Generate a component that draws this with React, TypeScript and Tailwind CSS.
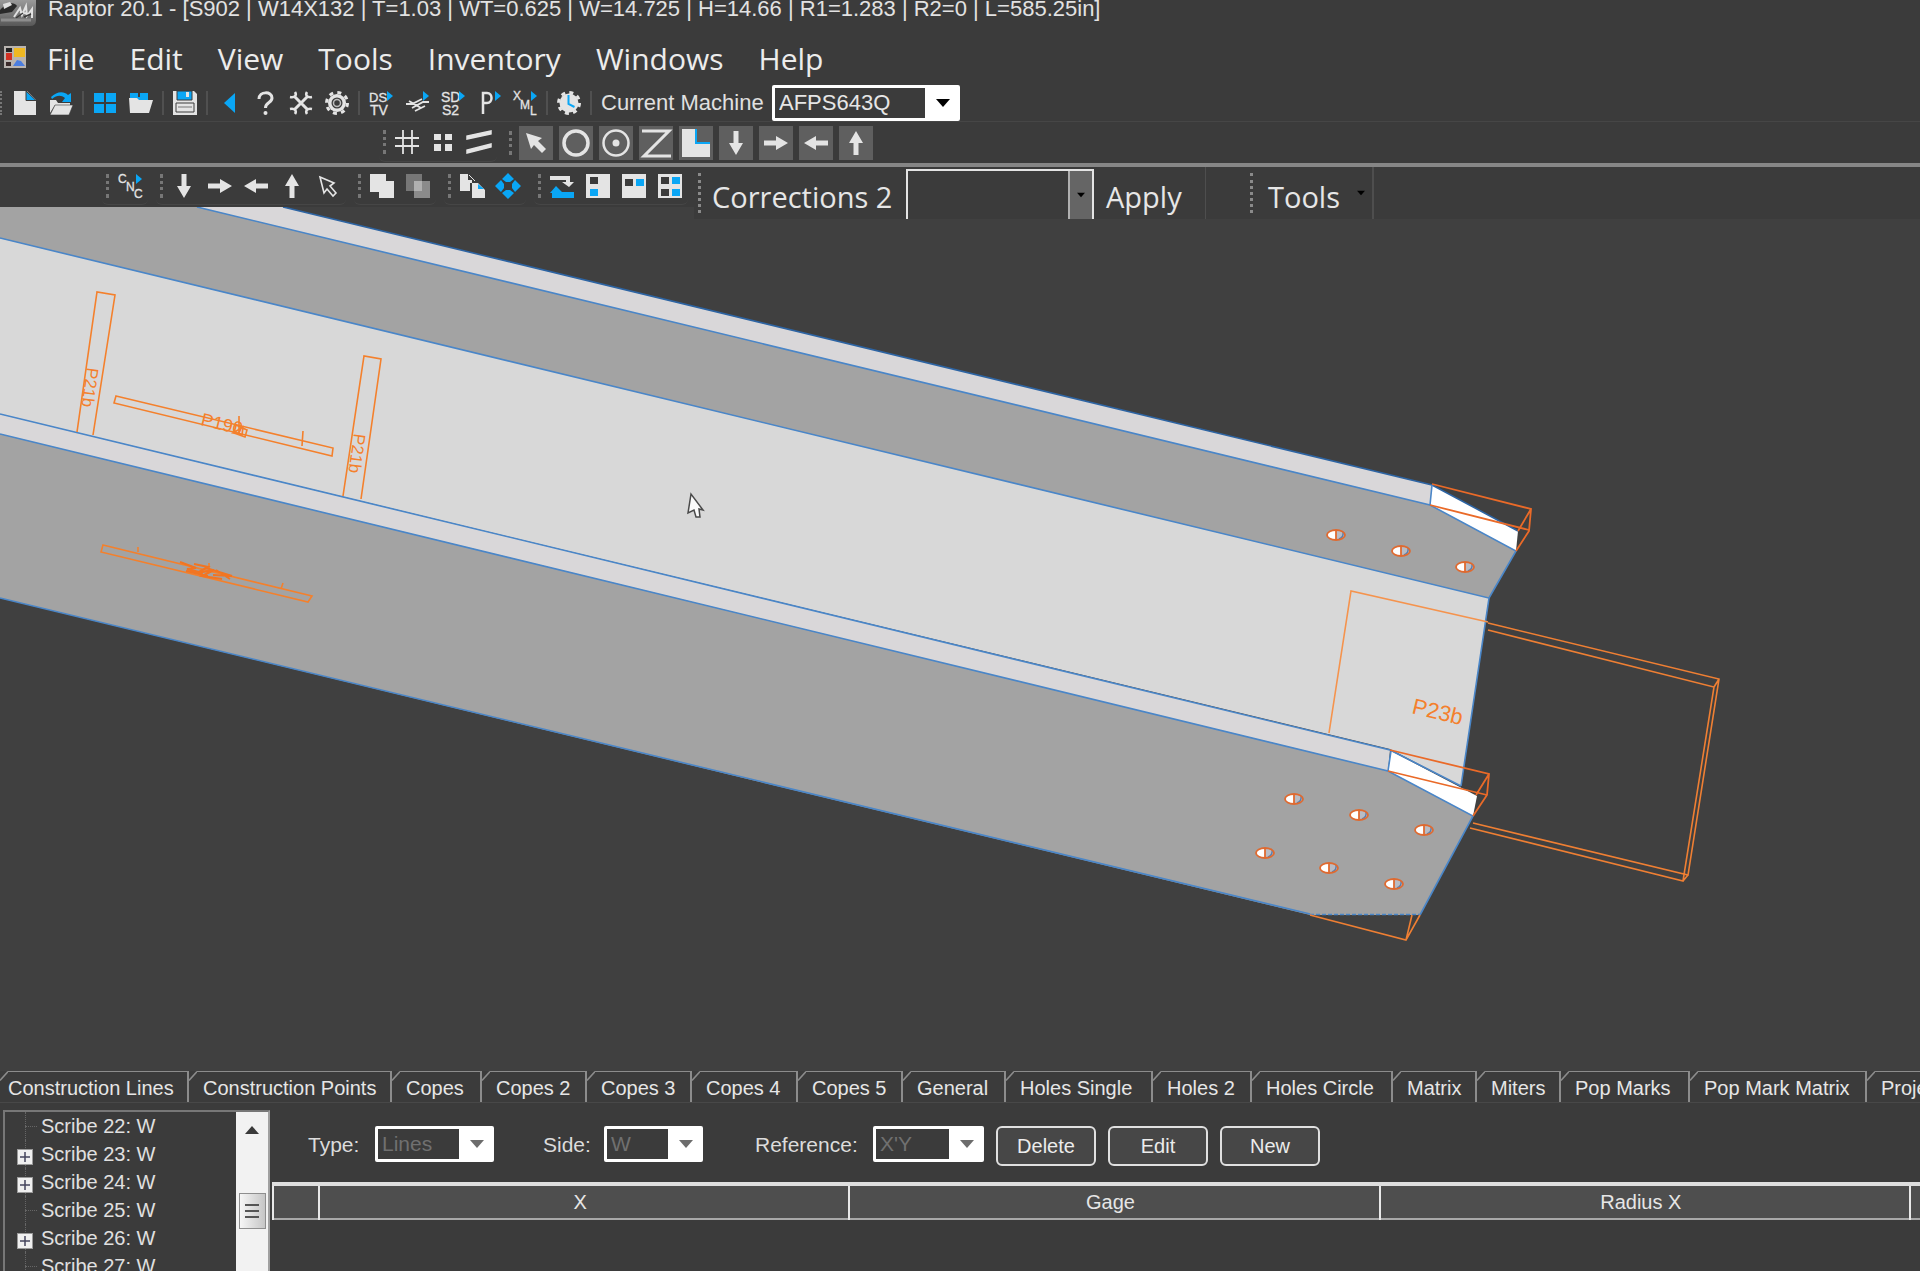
import type { ReactNode } from "react";

const LIGHT = "#e4e4e4";
const BLUE = "#0aa6f5";

function Icon({ children }: { children: ReactNode }) {
  return (
    <svg viewBox="0 0 24 24" className="h-6 w-6 shrink-0 overflow-visible" fill={LIGHT} aria-hidden="true">
      {children}
    </svg>
  );
}

function Glyph({ x, y, size, children }: { x: number; y: number; size: number; children: string }) {
  return (
    <text x={x} y={y} fontSize={size} fill={LIGHT} stroke={LIGHT} strokeWidth=".3">
      {children}
    </text>
  );
}

const arrowShapes = {
  down: "M9.500 0h5v12h4.500L12 24 5 12h4.500z",
  right: "M0 9.500v5h12v4.500L24 12 12 5v4.500z",
  left: "M24 9.500v5H12v4.500L0 12 12 5v4.500z",
  up: "M9.500 24h5V12h4.500L12 0 5 12h4.500z",
};

const arrow = (d: keyof typeof arrowShapes) => (
  <Icon>
    <path d={arrowShapes[d]} />
  </Icon>
);

const exportMark = <path d="M18 0l6 5-6 5z" fill={BLUE} />;

const icons: Record<string, ReactNode> = {
  newFile: (
    <Icon>
      <path d="M1 0h13l9 9v15H1z" />
      <path d="M13 0l10 9.500H13z" fill={BLUE} stroke="#3b3b3b" />
    </Icon>
  ),
  open: (
    <Icon>
      <path d="M1 9h6l2 3h12v2H6L1 22z" />
      <path d="M6 14h18l-4 10H1z" stroke="#3b3b3b" strokeWidth=".6" />
      <path d="M2 6C8 0 15 0 19 4l3-2v9h-9l3-4C12 4 8 4 3 8z" fill={BLUE} />
    </Icon>
  ),
  windows: (
    <Icon>
      <path d="M1 2h10v9H1zM13 2h10v9H13zM1 13h10v9H1zM13 13h10v9H13z" fill={BLUE} />
    </Icon>
  ),
  folder: (
    <Icon>
      <path d="M1 2h8v4h2V2h8v8H1z" fill={BLUE} />
      <path d="M0 7h8l2 2h14l-4 13H1z" />
    </Icon>
  ),
  save: (
    <Icon>
      <path d="M0 0h21l3 3v21H0z" />
      <path d="M4 0h15v9H4z" fill={BLUE} stroke="#3b3b3b" />
      <path d="M13 1h3v5h-3z" />
      <path d="M3 12h18v9H3z" fill={LIGHT} stroke="#3b3b3b" />
      <path d="M5 16h14" stroke="#777" />
    </Icon>
  ),
  back: (
    <Icon>
      <path d="M18 2v20L7 12z" fill={BLUE} />
    </Icon>
  ),
  help: (
    <Icon>
      <path d="M6 8c0-8 13-8 13-1 0 5-6.500 4-6.500 10" fill="none" stroke={LIGHT} strokeWidth="3" />
      <circle cx="12.500" cy="22" r="2" />
    </Icon>
  ),
  wrench: (
    <Icon>
      <path d="M5 5l14 14M19 5L5 19" stroke={LIGHT} strokeWidth="3" />
      <path
        d="M6 1c2 3 0 6-5 5M18 1c-2 3 0 6 5 5M6 23c2-3 0-6-5-5M18 23c-2-3 0-6 5-5"
        fill="none"
        stroke={LIGHT}
        strokeWidth="2.500"
      />
    </Icon>
  ),
  gear: (
    <Icon>
      <circle cx="12" cy="12" r="9" />
      <circle cx="12" cy="12" r="10.500" fill="none" stroke={LIGHT} strokeWidth="3" strokeDasharray="4 4.250" />
      <circle cx="12" cy="12" r="5.500" fill="#3b3b3b" />
      <circle cx="12" cy="12" r="3.500" fill="none" stroke="#bdbdbd" strokeWidth="1.500" />
    </Icon>
  ),
  dstv: (
    <Icon>
      <Glyph x={0} y={11} size={13}>DS</Glyph>
      <Glyph x={1} y={24} size={14}>TV</Glyph>
      {exportMark}
    </Icon>
  ),
  merge: (
    <Icon>
      <path d="M1 13h6l10-5M7 17l11-6h6M4 10l12 7M10 20l6-3 4-2" fill="none" stroke={LIGHT} strokeWidth="1.800" />
      {exportMark}
    </Icon>
  ),
  sds2: (
    <Icon>
      <Glyph x={0} y={11} size={14}>SD</Glyph>
      <Glyph x={1} y={24} size={14}>S2</Glyph>
      {exportMark}
    </Icon>
  ),
  part: (
    <Icon>
      <path d="M6 23V2h4c6 0 6 10 0 10H7" fill="none" stroke={LIGHT} strokeWidth="2.500" />
      {exportMark}
    </Icon>
  ),
  xml: (
    <Icon>
      <Glyph x={0} y={9} size={12}>X</Glyph>
      <Glyph x={7} y={18} size={12}>M</Glyph>
      <Glyph x={17} y={24} size={12}>L</Glyph>
      {exportMark}
    </Icon>
  ),
  clock: (
    <Icon>
      <circle cx="12" cy="12" r="9.500" />
      <circle cx="12" cy="12" r="10.500" fill="none" stroke={LIGHT} strokeWidth="3" strokeDasharray="4 4.250" />
      <path d="M11.500 4v9l6 3" fill="none" stroke={BLUE} strokeWidth="2" />
    </Icon>
  ),
  grid: (
    <Icon>
      <path d="M8 0v24M17 0v24M0 8h24M0 16h24" stroke={LIGHT} strokeWidth="1.800" />
    </Icon>
  ),
  dots: (
    <Icon>
      <path d="M3 4h7v6H3zM14 4h7v6h-7zM3 14h7v7H3zM14 14h7v7h-7z" />
    </Icon>
  ),
  slopes: (
    <Icon>
      <path d="M0 9V6l24-5v3zM0 23v-3l24-6v3z" strokeWidth="1.500" stroke={LIGHT} />
    </Icon>
  ),
  cursor: (
    <Icon>
      <path d="M2 2l16 5-4 3 8 8-4 4-8-8-3 4z" />
    </Icon>
  ),
  circle: (
    <Icon>
      <circle cx="12" cy="12" r="12" fill="none" stroke={LIGHT} strokeWidth="3.500" />
    </Icon>
  ),
  target: (
    <Icon>
      <circle cx="12" cy="12" r="12.500" fill="none" stroke={LIGHT} strokeWidth="2.500" />
      <circle cx="12" cy="12" r="3.500" />
    </Icon>
  ),
  zed: (
    <Icon>
      <path d="M-2 0h27L0 25h27" fill="none" stroke={LIGHT} strokeWidth="3" />
    </Icon>
  ),
  ell: (
    <Icon>
      <path d="M-2-2h13v15h15v13H-2z" />
      <path d="M12-2v14h14" fill="none" stroke={BLUE} strokeWidth="2" />
    </Icon>
  ),
  down: arrow("down"),
  right: arrow("right"),
  left: arrow("left"),
  up: arrow("up"),
  cnc: (
    <Icon>
      <Glyph x={0} y={9} size={12}>C</Glyph>
      <Glyph x={8} y={17} size={12}>N</Glyph>
      <Glyph x={16} y={24} size={12}>C</Glyph>
      {exportMark}
    </Icon>
  ),
  pick: (
    <Icon>
      <path d="M4 3l14 6-4 3 6 7-3 3-6-7-3 4z" fill="none" stroke={LIGHT} strokeWidth="1.600" />
    </Icon>
  ),
  union: (
    <Icon>
      <path d="M0 0h16v7h8v17H9v-6H0z" />
    </Icon>
  ),
  overlap: (
    <Icon>
      <path d="M0 0h16v17H0z" fill="#777" />
      <path d="M8 7h16v17H8z" fill="#8b8b8b" />
      <path d="M8 7h8v10H8z" fill="#b0b0b0" />
    </Icon>
  ),
  copy: (
    <Icon>
      <path d="M0 0h8v6h4v3h-2v8H0z" />
      <path d="M12 9h6l7 7v8H12z" />
      <path d="M18 10l6 5h-6z" fill={BLUE} />
      <path d="M9 1l6 6" stroke={LIGHT} />
    </Icon>
  ),
  move: (
    <Icon>
      <path d="M12-1l6 6-4 3h-4L6 5zM12 25l6-6-4-3h-4l-4 3zM-1 12l6-6 3 4v4l-3 4zM25 12l-6-6-3 4v4l3 4z" fill={BLUE} />
    </Icon>
  ),
  swap: (
    <Icon>
      <path d="M0 2h20v6h4l-5 5-7-5h4V6H0z" />
      <path d="M24 24H2v-5h-2l6-7 6 6h12z" fill={BLUE} />
    </Icon>
  ),
  snapA: (
    <Icon>
      <path d="M0 0h24v24H0z" />
      <path d="M4 3h8v7H4z" fill="#3b3b3b" />
      <path d="M4 15h8v7H4z" fill={BLUE} />
    </Icon>
  ),
  snapB: (
    <Icon>
      <path d="M0 0h24v24H0z" />
      <path d="M3 5h8v7H3z" fill="#3b3b3b" />
      <path d="M14 5h8v7h-8z" fill={BLUE} />
    </Icon>
  ),
  snapC: (
    <Icon>
      <path d="M0 0h24v24H0z" />
      <path d="M3 3h8v7H3zM3 15h8v7H3z" fill="#3b3b3b" />
      <path d="M14 3h8v7h-8zM14 15h8v7h-8z" fill={BLUE} />
    </Icon>
  ),
};

function Tool({ name }: { name: string }) {
  return (
    <button type="button" aria-label={name} className="flex w-9 shrink-0 items-center justify-center">
      {icons[name]}
    </button>
  );
}

function Separator() {
  return (
    <div className="flex h-6 w-2 shrink-0 justify-center">
      <div className="w-0.5 bg-[#505050]" />
    </div>
  );
}

function Grip({ tall = false }: { tall?: boolean }) {
  return (
    <div className="flex w-2.5 shrink-0 justify-center">
      <div
        className={
          tall
            ? "h-10 border-l-[3px] border-dotted border-[#8a8a8a]"
            : "h-6 border-l-[3px] border-dotted border-[#777777]"
        }
      />
    </div>
  );
}

function ToolGroup({ names }: { names: string[] }) {
  return (
    <div className="flex h-[38px] shrink-0 items-center rounded-md border-b border-[#464646]">
      <Grip />
      {names.map((n) => (
        <Tool key={n} name={n} />
      ))}
    </div>
  );
}

function Triangle({ className }: { className: string }) {
  return (
    <svg viewBox="0 0 14 8" className={className} fill="currentColor" aria-hidden="true">
      <path d="M0 0h14L7 8z" />
    </svg>
  );
}

function Combo({ id, value, width, disabled }: { id: string; value: string; width: string; disabled?: boolean }) {
  return (
    <div className={`relative flex h-9 shrink-0 ${width}`}>
      <select
        id={id}
        disabled={disabled}
        className={
          disabled
            ? "w-full appearance-none rounded-xs border-3 border-r-[35px] border-white bg-[#3b3b3b] pl-1 text-[21px] leading-6 text-[#707070] opacity-100"
            : "w-full appearance-none rounded-xs border-3 border-r-[35px] border-white bg-[#3b3b3b] pl-1 text-[22px] leading-6 text-[#e6e6e6]"
        }
      >
        <option>{value}</option>
      </select>
      <Triangle
        className={
          disabled
            ? "pointer-events-none absolute top-3.5 right-2.5 h-2 w-3.5 text-[#6c6c6c]"
            : "pointer-events-none absolute top-3.5 right-2.5 h-2 w-3.5 text-black"
        }
      />
    </div>
  );
}

const menus = ["File", "Edit", "View", "Tools", "Inventory", "Windows", "Help"];

function TitleBar() {
  return (
    <header className="flex h-[34px] items-start gap-3">
      <svg viewBox="0 0 36 26" className="h-[26px] w-9" aria-hidden="true">
        <defs>
          <linearGradient id="badge" x1="0" y1="0" x2="0" y2="1">
            <stop offset="0" stopColor="#9a9a9a" />
            <stop offset="1" stopColor="#585858" />
          </linearGradient>
        </defs>
        <path d="M0 0h36v20q0 6-6 6H0z" fill="url(#badge)" />
        <path d="M0 10c8-8 14-8 17-4l-5 6-12 2z" fill="#2a2a2a" />
        <path d="M3 4l7-2 2 3-8 4z" fill="#e0e0e0" />
        <path d="M14 17l6-9 2 7 4-9 1 10 5-7v9M20 12l8 2" fill="none" stroke="#e2e2e2" strokeWidth="2" />
        <path d="M16 18l7-5M24 17l7-3" stroke="#3a3a3a" strokeWidth="1.500" />
        <path d="M1 20h30" stroke="#8d8d8d" strokeWidth="3" />
      </svg>
      <h1 className="text-[22px] leading-[17px] whitespace-nowrap text-[#e2e2e2]">
        Raptor 20.1 - [S902 | W14X132 | T=1.03 | WT=0.625 | W=14.725 | H=14.66 | R1=1.283 | R2=0 | L=585.25in]
      </h1>
    </header>
  );
}

function MenuBar() {
  return (
    <nav className="flex h-[50px] items-center pl-[3px] font-['Open_Sans',sans-serif] text-[30px] text-[#ececec]">
      <svg viewBox="0 0 24 24" className="mr-5 mb-1 h-6 w-6" aria-hidden="true">
        <path d="M1 1h22v22H1z" fill="#b9b4b0" />
        <path d="M3 3h6v4H3z" fill="#222" />
        <path d="M3 8h6v7H3z" fill="#d23022" />
        <path d="M3 17h5v4H3z" fill="#3a2a2a" />
        <path d="M11 3h11v9H11z" fill="#efb822" />
        <path d="M10 21l4-6 4 1 4 5z" fill="#4a7de0" />
      </svg>
      <div className="flex gap-[35px]">
        {menus.map((m) => (
          <button key={m} type="button" className="leading-10">
            {m}
          </button>
        ))}
      </div>
    </nav>
  );
}

const pressed = ["cursor", "circle", "target", "zed", "ell", "down", "right", "left", "up"];

function Toolbars() {
  return (
    <div>
      <div className="flex h-[38px] items-center border-b border-[#464646]">
        <div className="mr-[5px] h-6 border-l-2 border-dotted border-[#777777]" />
        <Tool name="newFile" />
        <Tool name="open" />
        <Separator />
        <Tool name="windows" />
        <Tool name="folder" />
        <Separator />
        <Tool name="save" />
        <Separator />
        <Tool name="back" />
        <Tool name="help" />
        <Tool name="wrench" />
        <Tool name="gear" />
        <Separator />
        <Tool name="dstv" />
        <Tool name="merge" />
        <Tool name="sds2" />
        <Tool name="part" />
        <Tool name="xml" />
        <Separator />
        <Tool name="clock" />
        <Separator />
        <label htmlFor="machine" className="ml-1.5 w-[171px] text-[22px] whitespace-nowrap text-[#e0e0e0]">
          Current Machine
        </label>
        <Combo id="machine" value="AFPS643Q" width="w-[188px]" />
      </div>
      <div className="flex h-[41px] items-center gap-2 pl-[379px]">
        <ToolGroup names={["grid", "dots", "slopes"]} />
        <div className="flex items-center">
          <Grip />
          <div className="ml-1 flex gap-1.5">
            {pressed.map((n) => (
              <button
                key={n}
                type="button"
                aria-label={n}
                className="flex h-[34px] w-[34px] items-center justify-center bg-[#5f5f5f]"
              >
                {icons[n]}
              </button>
            ))}
          </div>
        </div>
      </div>
      <div className="flex h-11 items-start gap-2 border-t-4 border-[#868686] pl-[102px]">
        <ToolGroup names={["cnc"]} />
        <ToolGroup names={["down", "right", "left", "up", "pick"]} />
        <ToolGroup names={["union", "overlap"]} />
        <ToolGroup names={["copy", "move"]} />
        <ToolGroup names={["swap", "snapA", "snapB", "snapC"]} />
        <div className="relative z-10 -ml-0.5 flex h-[52px] grow items-center bg-[#3b3b3b] font-['Open_Sans',sans-serif] text-[29px] text-[#e6e6e6]">
          <Grip tall />
          <label htmlFor="corrections" className="mr-1.5 ml-2 w-[188px] pt-2 whitespace-nowrap">
            Corrections 2
          </label>
          <div className="relative h-[50px] w-[188px] self-end">
            <select
              id="corrections"
              className="h-full w-full appearance-none border-x-2 border-t-2 border-[#e4e4e4] bg-[#3b3b3b]"
            >
              <option></option>
            </select>
            <div className="pointer-events-none absolute top-0.5 right-0.5 bottom-0 flex w-6 items-center justify-center border-l-2 border-[#b0b0b0] bg-[#656565]">
              <Triangle className="h-1.5 w-2 text-black" />
            </div>
          </div>
          <button type="button" className="h-full w-28 border-r border-[#4e4e4e] pt-2 pl-3 text-left">
            Apply
          </button>
          <div className="ml-10">
            <Grip tall />
          </div>
          <button
            type="button"
            className="flex h-full w-[118px] items-center gap-[17px] border-r-2 border-[#4e4e4e] pt-2 pl-3"
          >
            Tools
            <Triangle className="mb-2 h-1.5 w-2 text-black" />
          </button>
        </div>
      </div>
    </div>
  );
}

const holes = [
  [1336, 535],
  [1401, 551],
  [1465, 567],
  [1294, 799],
  [1359, 815],
  [1424, 830],
  [1265, 853],
  [1329, 868],
  [1394, 884],
];

function BeamView() {
  return (
    <svg
      viewBox="0 207 1920 864"
      preserveAspectRatio="xMinYMin slice"
      className="min-h-0 w-full flex-1 bg-[#404040]"
      role="img"
      aria-label="Beam model S902"
    >
      <g stroke="none">
        <path d="M0 207H197L1430 505L1516 551L1489 598L0 238z" fill="#a3a3a3" />
        <path d="M197 207H283L1432 485L1430 505z" fill="#d9d7d9" />
        <path d="M0 238L1489 598L1461 786L1390 749L0 414z" fill="#d8d8d8" />
        <path d="M0 414L1390 750L1388 771L0 434z" fill="#d9d7d9" />
        <path d="M0 434L1388 771L1473 816L1420 915H1310L0 598z" fill="#a3a3a3" />
        <path d="M1432 485L1518 531L1516 551L1430 505z" fill="#fff" />
        <path d="M1391 751L1477 796L1473 816L1388 771z" fill="#fff" />
      </g>
      <g fill="none" stroke="#4a86c8" strokeWidth="1.600">
        <path d="M283 207L1432 485L1518 531" stroke="#2d64a3" />
        <path d="M197 207L1430 505L1516 551L1489 598" />
        <path d="M1432 485L1430 505M1391 751L1388 771" />
        <path d="M0 238L1489 598L1461 786" />
        <path d="M0 414L1390 750L1461 786" />
        <path d="M0 434L1388 771L1473 816L1420 915" />
        <path d="M0 598L1310 914" />
        <path d="M1310 914.500H1420" strokeDasharray="4 2" />
      </g>
      <g fill="none" stroke="#f4802c" strokeWidth="1.600">
        <path d="M77 432L97 292L115 295L93 435" />
        <path d="M343 496L364 356L381 359L361 499" />
        <path d="M116 396L333 448L332 456L114 403z" />
        <path d="M239 416V433M303 431L302 446" />
        <path d="M103 545L312 596L308 602L101 552zM138 547V552M209 563V569M283 583L281 589" />
        <path
          d="M180 562l16 6-9 1 16 4M194 564l14 3-11 6 17-3-12 6 20 3M206 568l26 8-19-1M216 570l14 9M186 571l22 5"
          stroke="#f27522"
          strokeWidth="2"
        />
        <path d="M233 433l10-6-1 8zM236 425l11 5-2 7-11-4z" />
      </g>
      <g fill="none" stroke="#ef7f33" strokeWidth="1.600">
        <path d="M1329 733L1351 591L1488 622" stroke="#f5934d" />
        <path d="M1488 623L1719 679L1688 875L1473 823M1488 630L1714 687L1683 881L1470 828M1719 679L1714 687M1688 875L1683 881" />
        <path d="M1310 915L1406 940L1420 915M1406 940L1412 915" />
      </g>
      <g fill="none" stroke="#ea6a28" strokeWidth="1.800">
        <path d="M1432 484L1531 509L1529 531L1516 551M1430 505L1529 530M1531 509L1518 531" />
        <path d="M1390 750L1489 774L1487 795L1473 816M1388 771L1487 795M1489 774L1476 795" />
      </g>
      <g fill="#f4802c" fontFamily="'Liberation Sans', sans-serif">
        <text transform="translate(87 367) rotate(98)" fontSize="17">
          P21b
        </text>
        <text transform="translate(354 433) rotate(98)" fontSize="17">
          P21b
        </text>
        <text transform="translate(200 425) rotate(13.500)" fontSize="18">
          P190
        </text>
        <text transform="translate(1411 713) rotate(13.500)" fontSize="22">
          P23b
        </text>
      </g>
      {holes.map(([x, y]) => (
        <g key={`${x}-${y}`}>
          <ellipse cx={x} cy={y} rx="9" ry="5" fill="#b9bcc4" />
          <path d={`M${x} ${y - 5}a9 5 0 0 0 0 10z`} fill="#fff" />
          <path d={`M${x + 3} ${y + 4}q5-2 4-7`} fill="none" stroke="#5a7fae" strokeWidth="1.500" />
          <ellipse cx={x} cy={y} rx="9" ry="5" fill="none" stroke="#df6a30" strokeWidth="1.800" />
          <path d={`M${x} ${y - 5}v10`} stroke="#df6a30" strokeWidth="1.800" />
        </g>
      ))}
      <path
        d="M691 494L688 513L694 510L696 517H700L699 509L703 510z"
        fill="#fafafa"
        stroke="#4a4a4a"
        strokeWidth="1.500"
      />
    </svg>
  );
}

const tabs: [string, string, string][] = [
  ["Construction Lines", "w-[189px]", "pl-0"],
  ["Construction Points", "w-[203px]", "pl-1.5"],
  ["Copes", "w-[90px]", "pl-1.5"],
  ["Copes 2", "w-[105px]", "pl-1.5"],
  ["Copes 3", "w-[105px]", "pl-1.5"],
  ["Copes 4", "w-[106px]", "pl-1.5"],
  ["Copes 5", "w-[105px]", "pl-1.5"],
  ["General", "w-[103px]", "pl-1.5"],
  ["Holes Single", "w-[147px]", "pl-1.5"],
  ["Holes 2", "w-[99px]", "pl-1.5"],
  ["Holes Circle", "w-[141px]", "pl-1.5"],
  ["Matrix", "w-[84px]", "pl-1.5"],
  ["Miters", "w-[84px]", "pl-1.5"],
  ["Pop Marks", "w-[129px]", "pl-1.5"],
  ["Pop Mark Matrix", "w-[177px]", "pl-1.5"],
  ["Projection", "w-[130px]", "pl-1.5"],
];

function TabStrip() {
  return (
    <div role="tablist" className="flex h-8 shrink-0 overflow-hidden border-b border-[#484848] text-[20px]">
      {tabs.map(([label, width, pad]) => (
        <button
          key={label}
          type="button"
          role="tab"
          className={`flex shrink-0 border-r-2 border-[#8c8c8c] text-left text-[#e6e6e6] ${width}`}
        >
          <svg viewBox="0 0 8 10" className="h-2.5 w-2 shrink-0" aria-hidden="true">
            <path d="M0 9.500L8 .5" stroke="#8c8c8c" strokeWidth="1.500" />
          </svg>
          <span className={`h-full grow border-t border-[#8c8c8c] leading-8 whitespace-nowrap ${pad}`}>{label}</span>
        </button>
      ))}
    </div>
  );
}

const scribes = [
  { label: "Scribe 22: W", open: false },
  { label: "Scribe 23: W", open: true },
  { label: "Scribe 24: W", open: true },
  { label: "Scribe 25: W", open: false },
  { label: "Scribe 26: W", open: true },
  { label: "Scribe 27: W", open: false },
];

function ScribeTree() {
  return (
    <div className="ml-[3px] flex w-[267px] shrink-0 overflow-hidden border-2 border-b-0 border-[#777777] border-r-[#a0a0a0]">
      <ul className="grow text-[20px] text-[#e0e0e0]">
        {scribes.map((s) => (
          <li key={s.label} className="flex h-7 items-center">
            <span className="relative ml-3 flex h-full w-6 items-center">
              <span className="absolute inset-y-0 left-2 border-l border-dotted border-[#666666]" />
              {s.open ? (
                <button
                  type="button"
                  aria-label={`Expand ${s.label}`}
                  className="relative mt-1.5 flex h-4 w-4 items-center justify-center border border-[#9a9a9a] bg-[#f0f0f0]"
                >
                  <svg viewBox="0 0 10 10" className="h-2.5 w-2.5" aria-hidden="true">
                    <path d="M5 0v10M0 5h10" stroke="#44445c" strokeWidth="1.500" />
                  </svg>
                </button>
              ) : (
                <span className="ml-2 w-3 border-t border-dotted border-[#666666]" />
              )}
            </span>
            <span className="whitespace-nowrap">{s.label}</span>
          </li>
        ))}
      </ul>
      <div className="flex w-8 flex-col items-center bg-[#f2f2f2]">
        <svg viewBox="0 0 14 8" className="mt-3.5 h-2 w-3.5" aria-hidden="true">
          <path d="M7 0l7 8H0z" fill="#3a3a3a" />
        </svg>
        <div className="mt-[59px] flex h-9 w-[27px] flex-col items-center justify-center gap-1 border border-[#8e8e8e] bg-linear-to-r from-[#f6f6f6] to-[#c6c6c6]">
          <div className="h-0.5 w-3.5 bg-[#555555]" />
          <div className="h-0.5 w-3.5 bg-[#555555]" />
          <div className="h-0.5 w-3.5 bg-[#555555]" />
        </div>
      </div>
    </div>
  );
}

function FormRow() {
  const button =
    "h-10 w-[100px] rounded-md border-2 border-[#e0e0e0] bg-[#474747] text-[20px] text-[#ececec]";
  return (
    <form className="flex items-start pt-4 pl-9 text-[21px] text-[#dcdcdc]">
      <label htmlFor="type" className="w-[67px] leading-[38px]">
        Type:
      </label>
      <Combo id="type" value="Lines" width="w-[119px]" disabled />
      <label htmlFor="side" className="ml-[49px] w-[61px] leading-[38px]">
        Side:
      </label>
      <Combo id="side" value="W" width="w-[99px]" disabled />
      <label htmlFor="reference" className="ml-[52px] w-[118px] leading-[38px]">
        Reference:
      </label>
      <Combo id="reference" value="X'Y" width="w-[111px]" disabled />
      <div className="ml-3 flex gap-3">
        <button type="button" className={button}>
          Delete
        </button>
        <button type="button" className={button}>
          Edit
        </button>
        <button type="button" className={button}>
          New
        </button>
      </div>
    </form>
  );
}

function ScribeTable() {
  return (
    <table className="mt-4 w-full table-fixed border-t border-black text-[20px] text-[#e6e6e6]">
      <thead>
        <tr className="h-[35px] border-t-4 border-b-2 border-t-[#dedede] border-b-[#a8a8a8] bg-[#4e4e4e]">
          <th className="w-[46px] border-x-2 border-[#e8e8e8]" aria-label="Row" />
          <th className="w-[32.200%] border-r-2 border-[#e8e8e8] pr-2 font-normal">X</th>
          <th className="w-[32.200%] border-r-2 border-[#e8e8e8] pr-2 font-normal">Gage</th>
          <th className="w-[32.200%] border-r-2 border-[#e8e8e8] pr-2 font-normal">Radius X</th>
          <th aria-label="More" />
        </tr>
      </thead>
    </table>
  );
}

export default function App() {
  return (
    <div className="flex h-screen flex-col overflow-hidden bg-[#3b3b3b] font-['Liberation_Sans',sans-serif]">
      <TitleBar />
      <MenuBar />
      <Toolbars />
      <BeamView />
      <TabStrip />
      <div className="flex h-[168px] shrink-0 overflow-hidden pt-[7px]">
        <ScribeTree />
        <main className="flex min-w-0 grow flex-col pl-0.5">
          <FormRow />
          <ScribeTable />
        </main>
      </div>
    </div>
  );
}
